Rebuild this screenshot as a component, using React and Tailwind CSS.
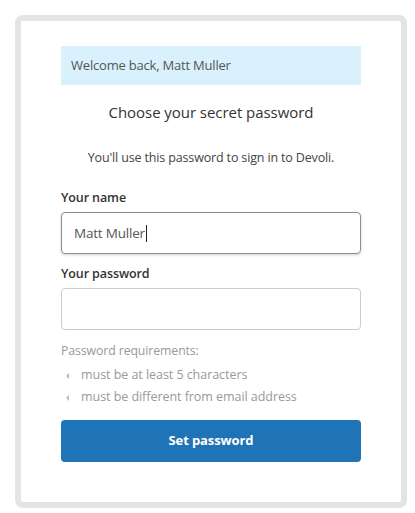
export default function App() {
  const font = { fontFamily: '"Open Sans", "Noto Sans", sans-serif' };
  return (
    <div className="w-[415px] h-[513px] bg-white pt-[15px] pl-[15px]" style={font}>
      <div className="w-[392px] h-[493px] border-[6px] border-[#e4e4e4] rounded-[8px] px-[40px] pt-[25px]">
        <div className="h-[39px] bg-[#d9f1fd] px-[10px] flex items-center text-[13px] text-[#555] tracking-[-0.2px]">
          Welcome back, Matt Muller
        </div>
        <div className="mt-[17px] leading-[20px] text-[15px] text-[#333] text-center tracking-[-0.05px]">
          Choose your secret password
        </div>
        <div className="mt-[26px] leading-[20px] text-[12.5px] text-[#444] text-center tracking-[-0.15px]">
          You'll use this password to sign in to Devoli.
        </div>
        <div className="mt-[20px] leading-[20px] text-[12.5px] font-semibold text-[#333] tracking-[-0.1px]">
          Your name
        </div>
        <div className="mt-[4px] h-[42px] border border-[#8d8d8d] rounded-[4px] shadow-[0_1px_3px_rgba(0,0,0,0.18)] px-[12px] flex items-center text-[13.5px] text-[#555] tracking-[-0.2px]">
          Matt Muller<span className="inline-block w-px h-[17px] bg-[#222] ml-[1px]"></span>
        </div>
        <div className="mt-[10px] leading-[20px] text-[12.5px] font-semibold text-[#333] tracking-[-0.1px]">
          Your password
        </div>
        <div className="mt-[4px] h-[42px] border border-[#cccccc] rounded-[4px]"></div>
        <div className="mt-[11px] leading-[20px] text-[12.3px] text-[#999] tracking-[-0.1px]">
          Password requirements:
        </div>
        <div className="mt-[3px] flex flex-col text-[12.5px] text-[#999] tracking-[-0.05px]">
          {["must be at least 5 characters", "must be different from email address"].map((t) => (
            <div key={t} className="h-[22px] flex items-center">
              <svg width="20" height="10" viewBox="0 0 20 10" className="shrink-0">
                <polygon points="5,6 8,3 8,9" fill="#bbbbbb" />
              </svg>
              <span>{t}</span>
            </div>
          ))}
        </div>
        <div className="mt-[12px] h-[42px] bg-[#1f73b7] rounded-[4px] flex items-center justify-center text-white text-[13px] font-bold tracking-[-0.1px]">
          Set password
        </div>
      </div>
    </div>
  );
}
